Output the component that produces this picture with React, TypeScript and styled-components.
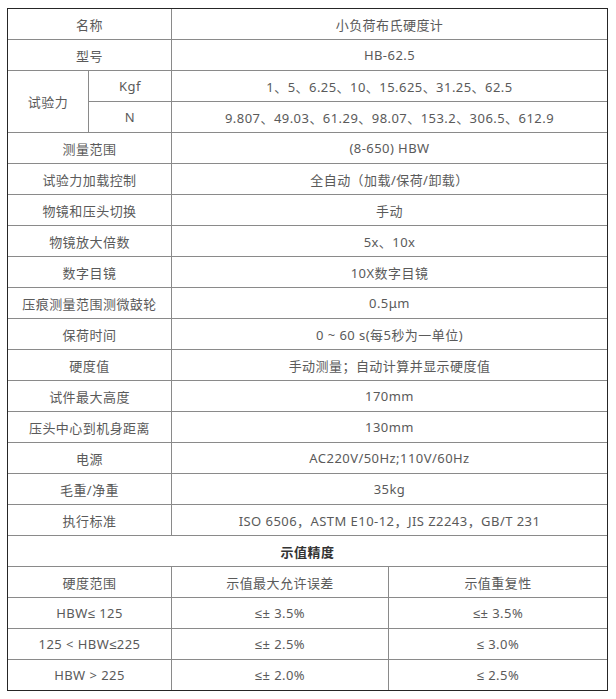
import React from "react";
import styled, { createGlobalStyle } from "styled-components";

const GlobalStyle = createGlobalStyle`
  html, body {
    margin: 0;
    padding: 0;
    background: #ffffff;
  }
  body {
    font-family: "Noto Sans", "Liberation Sans", "Noto Sans CJK SC", sans-serif;
  }
`;

const Page = styled.div`
  padding: 8px 9px 0 7px;
`;

const SpecTable = styled.table`
  width: 600px;
  border-collapse: collapse;
  table-layout: fixed;
  outline: 1px solid #262626;
  outline-offset: -1px;
`;

const Cell = styled.td<{ $bold?: boolean }>`
  border: 1px solid #8a8a8a;
  height: 30px;
  padding: 0 2px;
  text-align: center;
  vertical-align: middle;
  font-size: 13px;
  letter-spacing: 0.45px;
  color: ${(p) => (p.$bold ? "#333" : "#5a5a5a")};
  font-weight: ${(p) => (p.$bold ? 700 : 400)};
  white-space: nowrap;
`;

const rows: [string, string][] = [
  ["测量范围", "(8-650) HBW"],
  ["试验力加载控制", "全自动（加载/保荷/卸载）"],
  ["物镜和压头切换", "手动"],
  ["物镜放大倍数", "5x、10x"],
  ["数字目镜", "10X数字目镜"],
  ["压痕测量范围测微鼓轮", "0.5μm"],
  ["保荷时间", "0 ~ 60 s(每5秒为一单位)"],
  ["硬度值", "手动测量；自动计算并显示硬度值"],
  ["试件最大高度", "170mm"],
  ["压头中心到机身距离", "130mm"],
  ["电源", "AC220V/50Hz;110V/60Hz"],
  ["毛重/净重", "35kg"],
  ["执行标准", "ISO 6506，ASTM E10-12，JIS Z2243，GB/T 231"],
];

const accuracy: [string, string, string][] = [
  ["HBW≤ 125", "≤± 3.5%", "≤± 3.5%"],
  ["125 < HBW≤225", "≤± 2.5%", "≤ 3.0%"],
  ["HBW >  225", "≤± 2.0%", "≤ 2.5%"],
];

const App: React.FC = () => {
  return (
    <Page>
      <GlobalStyle />
      <SpecTable>
        <colgroup>
          <col style={{ width: 81 }} />
          <col style={{ width: 83 }} />
          <col style={{ width: 217 }} />
          <col style={{ width: 219 }} />
        </colgroup>
        <tbody>
          <tr>
            <Cell colSpan={2}>名称</Cell>
            <Cell colSpan={2}>小负荷布氏硬度计</Cell>
          </tr>
          <tr>
            <Cell colSpan={2}>型号</Cell>
            <Cell colSpan={2}>HB-62.5</Cell>
          </tr>
          <tr>
            <Cell rowSpan={2}>试验力</Cell>
            <Cell>Kgf</Cell>
            <Cell colSpan={2}>1、5、6.25、10、15.625、31.25、62.5</Cell>
          </tr>
          <tr>
            <Cell>N</Cell>
            <Cell colSpan={2}>
              9.807、49.03、61.29、98.07、153.2、306.5、612.9
            </Cell>
          </tr>
          {rows.map(([label, value]) => (
            <tr key={label}>
              <Cell colSpan={2}>{label}</Cell>
              <Cell colSpan={2}>{value}</Cell>
            </tr>
          ))}
          <tr>
            <Cell colSpan={4} $bold>
              示值精度
            </Cell>
          </tr>
          <tr>
            <Cell colSpan={2}>硬度范围</Cell>
            <Cell>示值最大允许误差</Cell>
            <Cell>示值重复性</Cell>
          </tr>
          {accuracy.map(([range, err, rep]) => (
            <tr key={range}>
              <Cell colSpan={2}>{range}</Cell>
              <Cell>{err}</Cell>
              <Cell>{rep}</Cell>
            </tr>
          ))}
        </tbody>
      </SpecTable>
    </Page>
  );
};

export default App;
